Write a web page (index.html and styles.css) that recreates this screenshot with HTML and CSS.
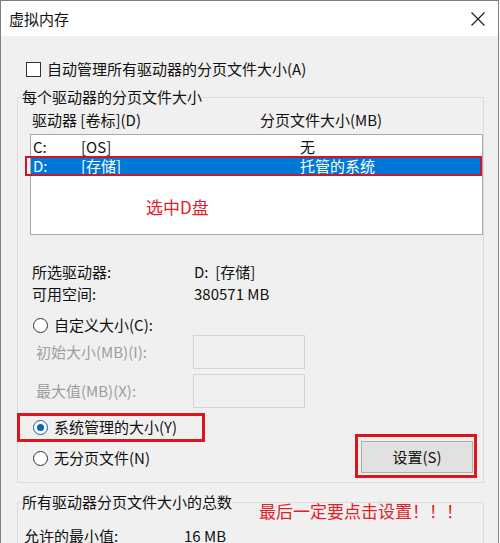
FILE: index.html
```html
<!DOCTYPE html>
<html lang="zh-CN">
<head>
<meta charset="utf-8">
<title>虚拟内存</title>
<link rel="stylesheet" href="styles.css">
</head>
<body>
<div class="window">
  <div class="titlebar">
    <span class="title">虚拟内存</span>
    <svg class="close" width="14" height="14" viewBox="0 0 14 14"><path d="M0.5 0.5 L13.5 13.5 M13.5 0.5 L0.5 13.5" stroke="#1a1a1a" stroke-width="1.1" fill="none"/></svg>
  </div>
  <div class="content">
    <div class="auto-row"><span class="checkbox"></span><span>自动管理所有驱动器的分页文件大小(A)</span></div>

    <fieldset class="group group-drives">
      <legend>每个驱动器的分页文件大小</legend>
      <div class="group-body">
        <div class="col-heads"><span class="col-drive">驱动器 [卷标](D)</span><span>分页文件大小(MB)</span></div>
        <div class="listbox">
          <div class="row"><span class="c1">C:</span><span class="c2">[OS]</span><span>无</span></div>
          <div class="row selected"><span class="c1">D:</span><span class="c2">[存储]</span><span>托管的系统</span></div>
          <div class="note-select">选中D盘</div>
        </div>
        <div class="info">
          <div class="info-row"><span class="info-label">所选驱动器:</span><span>D:&nbsp;&nbsp;[存储]</span></div>
          <div class="info-row"><span class="info-label">可用空间:</span><span>380571 MB</span></div>
        </div>
        <div class="radio-row custom"><span class="radio"></span><span>自定义大小(C):</span></div>
        <div class="size-row"><span class="size-label">初始大小(MB)(I):</span><span class="size-input"></span></div>
        <div class="size-row second"><span class="size-label">最大值(MB)(X):</span><span class="size-input"></span></div>
        <div class="bottom">
          <div class="bottom-radios">
            <div class="radio-row system"><span class="radio checked"></span><span>系统管理的大小(Y)</span></div>
            <div class="radio-row none"><span class="radio"></span><span>无分页文件(N)</span></div>
          </div>
          <div class="btn-set">设置(S)</div>
        </div>
      </div>
    </fieldset>

    <fieldset class="group group-total">
      <legend>所有驱动器分页文件大小的总数</legend>
      <div class="group-body total-body">
        <div class="total-row"><span class="total-label">允许的最小值:</span><span>16 MB</span></div>
      </div>
    </fieldset>
  </div>
  <div class="note-final">最后一定要点击设置！！！</div>
</div>
</body>
</html>
```

FILE: styles.css
```css
*, *::before, *::after { box-sizing: border-box; }

html, body {
  margin: 0;
  padding: 0;
  background: #ffffff;
}

body {
  width: 500px;
  height: 543px;
  overflow: hidden;
  font-family: "Noto Sans CJK SC", "Noto Sans", sans-serif;
  font-size: 15px;
  color: #111111;
}

.window {
  position: relative;
  width: 499px;
  height: 543px;
  border: 1px solid #7d7d7d;
  border-bottom: none;
  background: #f0f0f0;
  overflow: hidden;
}

.titlebar {
  height: 35px;
  background: #ffffff;
  display: flex;
  align-items: center;
  justify-content: space-between;
  padding: 0 13px 0 8px;
}

.title {
  line-height: 20px;
  margin-top: 1px;
}

.close { display: block; margin-top: 1px; }

.content {
  padding-top: 22px;
}

.auto-row {
  display: flex;
  align-items: center;
  height: 22px;
  line-height: 22px;
  padding-left: 25px;
  gap: 6px;
}

.checkbox {
  width: 15px;
  height: 15px;
  border: 1px solid #333333;
  background: #ffffff;
  flex: none;
}

.group {
  margin: 6px 0 0 16px;
  padding: 0;
  width: 467px;
  border: 1px solid #dcdcdc;
  min-inline-size: 0;
}

.group legend {
  padding: 0;
  margin-left: 4px;
  line-height: 22px;
  height: 22px;
}

.group-body {
  padding: 1px 0 9px 12px;
}

.col-heads {
  display: flex;
  height: 22px;
  line-height: 22px;
  padding-left: 2px;
}

.col-drive { width: 228px; }

.listbox {
  margin-top: 3px;
  width: 453px;
  height: 101px;
  border: 1px solid #a9a9a9;
  background: #ffffff;
  padding-top: 2px;
}

.row {
  display: flex;
  height: 19px;
  line-height: 19px;
  padding-left: 2px;
}

.row .c1 { width: 48px; }
.row .c2 { width: 219px; }

.row.selected {
  position: relative;
  background: #0078d7;
  color: #ffffff;
}

.row.selected::after {
  content: "";
  position: absolute;
  left: -6px;
  right: 0;
  top: 0;
  bottom: -1px;
  border: 2px solid #c8182e;
}

.note-select {
  margin-top: 20px;
  padding-left: 115px;
  font-size: 17px;
  line-height: 24px;
  color: #e3202a;
}

.info {
  margin-top: 26px;
}

.info-row {
  display: flex;
  height: 22px;
  line-height: 22px;
  padding-left: 2px;
}

.info-label { width: 162px; }

.radio-row {
  display: flex;
  align-items: center;
  height: 22px;
  line-height: 22px;
  padding-left: 3px;
  gap: 6px;
}

.radio-row.custom {
  height: 20px;
  margin-top: 10px;
}

.radio {
  width: 15px;
  height: 15px;
  border: 1px solid #333333;
  border-radius: 50%;
  background: #ffffff;
  flex: none;
  display: flex;
  align-items: center;
  justify-content: center;
}

.radio.checked {
  border-color: #0a5fb4;
}

.radio.checked::before {
  content: "";
  width: 7px;
  height: 7px;
  border-radius: 50%;
  background: #0a64c0;
}

.size-row {
  display: flex;
  align-items: center;
  height: 34px;
  color: #9d9d9d;
}

.size-row.second { margin-top: 5px; }

.size-label {
  width: 163px;
  padding-left: 6px;
  line-height: 22px;
}

.size-input {
  width: 112px;
  height: 34px;
  border: 1px solid #d4d4d4;
  background: #f0f0f0;
}

.bottom {
  display: flex;
  align-items: flex-start;
  margin-top: 8px;
}

.bottom-radios {
  display: flex;
  flex-direction: column;
  gap: 9px;
}

.radio-row.system {
  position: relative;
}

.radio-row.system::after {
  content: "";
  position: absolute;
  left: -13px;
  top: -3px;
  width: 188px;
  height: 29px;
  border: 3px solid #e0141e;
}

.btn-set {
  position: relative;
  margin: 25px 10px 0 auto;
  width: 112px;
  height: 32px;
  line-height: 30px;
  text-align: center;
  border: 1px solid #adadad;
  background: #e1e1e1;
}

.btn-set::after {
  content: "";
  position: absolute;
  left: -7px;
  top: -8px;
  width: 122px;
  height: 44px;
  border: 3px solid #e0141e;
}

.group-total {
  margin-top: 8px;
}

.total-body {
  padding: 12px 0 0 6px;
}

.total-row {
  display: flex;
  height: 22px;
  line-height: 22px;
}

.total-label { width: 160px; }

.note-final {
  position: absolute;
  left: 258px;
  top: 498px;
  font-size: 17px;
  line-height: 24px;
  color: #e3202a;
}
```
